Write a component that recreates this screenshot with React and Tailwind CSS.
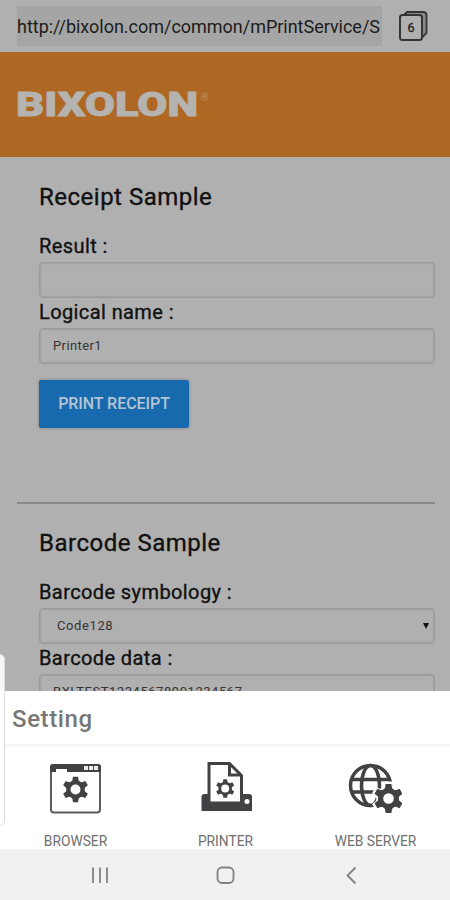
import React from "react";

const TEETH = [0, 60, 120, 180, 240, 300];

function Gear({ x, y, r, hole }) {
  return (
    <g transform={`translate(${x} ${y})`}>
      <circle
        r={(r * 0.72 + hole) / 2}
        fill="none"
        stroke="currentColor"
        strokeWidth={r * 0.72 - hole}
      />
      {TEETH.map((angle) => (
        <path
          key={angle}
          transform={`rotate(${angle}) scale(${r})`}
          d="M-.34-.62-.24-.72-.2-1H.2L.24-.72.34-.62Z"
          fill="currentColor"
        />
      ))}
    </g>
  );
}

function BrowserIcon() {
  return (
    <svg width="53" height="52" viewBox="0 0 53 52" className="text-[#424244]">
      <rect x="2" y="3" width="49" height="47.500" rx="3" fill="none" stroke="#5c5c5e" strokeWidth="2" />
      <path d="M1 10V5Q1 2 4 2H49Q52 2 52 5V10H18V7H7V10Z" fill="currentColor" />
      <path d="M35 4h4v4H35zM40 4h4v4H40zM45 4h4v4H45z" fill="#fff" opacity="0.9" />
      <Gear x={26.5} y={27.5} r={12.8} hole={5} />
    </svg>
  );
}

function PrinterIcon() {
  return (
    <svg width="53" height="52" viewBox="0 0 53 52" className="text-[#424244]">
      <path d="M2.500 49V35q0-3 3-3H50q3 0 3 3V49Z" fill="currentColor" />
      <path d="M10 41V1.500H30.500L42.500 13.500V41Z" fill="#fff" stroke="currentColor" strokeWidth="3" />
      <path d="M30.500 2V13H42" fill="none" stroke="currentColor" strokeWidth="3" />
      <circle cx="48" cy="39.500" r="2.500" fill="#fff" />
      <Gear x={26.200} y={26.500} r={9.300} hole={4} />
    </svg>
  );
}

function WebServerIcon() {
  return (
    <svg width="54" height="52" viewBox="0 0 54 52" className="text-[#424244]">
      <g fill="none" stroke="currentColor" strokeWidth="3.500">
        <circle cx="22.500" cy="23.500" r="20" />
        <ellipse cx="22.500" cy="23.500" rx="9" ry="20" />
        <path d="M4 17.500H41M4 30H41" />
      </g>
      <g className="text-white">
        <Gear x={40.500} y={36.500} r={17} hole={0} />
      </g>
      <Gear x={40.500} y={36.500} r={14.500} hole={5.300} />
    </svg>
  );
}

function TabsIcon() {
  return (
    <svg width="29" height="32" viewBox="0 0 29 32" fill="none" stroke="#343434">
      <path
        d="M5.500 4.500 8 2H24Q27.500 2 27.500 5V23L23.500 27"
        fill="#8a8a8a"
        strokeWidth="1.800"
      />
      <rect x="1" y="5" width="22" height="25" rx="2.500" fill="#b0b0b0" strokeWidth="2" />
      <text
        x="12"
        y="21.500"
        textAnchor="middle"
        fontSize="12.500"
        fontFamily="Roboto, sans-serif"
        fill="#222"
        stroke="#222"
        strokeWidth="0.300"
      >
        6
      </text>
    </svg>
  );
}

function Logo() {
  return (
    <svg width="196" height="40" viewBox="0 0 196 40" fill="#b5b3af">
      <text
        x="0"
        y="27"
        fontFamily="Roboto, sans-serif"
        fontWeight="900"
        fontSize="33.500"
        textLength="182"
        lengthAdjust="spacingAndGlyphs"
        stroke="#b5b3af"
        strokeWidth="0.800"
      >
        BIXOLON
      </text>
      <text x="184.500" y="12" fontFamily="Roboto, sans-serif" fontSize="10.500" opacity="0.6">
        ®
      </text>
    </svg>
  );
}

function Field({ label, children }) {
  return (
    <div className="h-[66px]">
      <div className="h-[30px] leading-[29px] text-[20px] text-[#111]">
        <span className="tracking-[0.4px] [-webkit-text-stroke:0.35px_#111]">
          {label}
        </span>
      </div>
      <div className="h-9 flex items-center justify-between rounded-[4px] border shadow-[inset_0_0_1px_1px_#a2a2a2] border-[#999] px-[13px] text-[13px] text-[#333]">
        {children}
      </div>
    </div>
  );
}

function SectionTitle({ children }) {
  return (
    <h2 className="h-[50px] text-[24px] leading-[31px] text-[#111]">
      <span className="tracking-[0.5px] [-webkit-text-stroke:0.35px_#111]">
        {children}
      </span>
    </h2>
  );
}

function SheetItem({ icon, label }) {
  return (
    <div className="w-[150px] flex flex-col items-center">
      {icon}
      <span className="mt-[19px] pl-px text-[13.8px] leading-4 text-[#707070]">
        {label}
      </span>
    </div>
  );
}

export default function App() {
  return (
    <div className="relative w-[450px] h-[900px] overflow-hidden flex flex-col bg-[#b0b0b0] font-[Roboto,sans-serif]">
      <div className="h-[52px] shrink-0 flex items-start pl-[17px]">
        <div className="mt-[6px] w-[365px] h-[40px] bg-[#a5a5a5] leading-[41px] text-[18px] text-[#1c1c1c] whitespace-nowrap">
          <span className="tracking-[-0.02px]">
            http://bixolon.com/common/mPrintService/S
          </span>
        </div>
        <div className="ml-[17px] mt-[10px]">
          <TabsIcon />
        </div>
      </div>

      <header className="h-[105px] shrink-0 bg-[#ae6823] pl-[16px] pt-[37px]">
        <Logo />
      </header>

      <main className="h-[534px] shrink-0 overflow-hidden">
        <section className="pl-[39px] pr-[15px] pt-[25px]">
          <SectionTitle>Receipt Sample</SectionTitle>
          <Field label="Result :" />
          <Field label="Logical name :">
            <span className="tracking-[0.4px]">Printer1</span>
          </Field>
          <button className="mt-[16px] block w-[150px] h-[48px] rounded-[2px] bg-[#176aae] text-[16px] text-[#b5c4d2] font-medium shadow-[0_0_3px_#777]">
            <span className="tracking-[-0.05px]">PRINT RECEIPT</span>
          </button>
        </section>
        <hr className="mt-[74px] ml-[17px] mr-[15px] border-t-2 border-[#888]" />
        <section className="pl-[39px] pr-[15px] pt-[24px]">
          <SectionTitle>Barcode Sample</SectionTitle>
          <Field label="Barcode symbology :">
            <span className="pl-1 tracking-[0.6px]">Code128</span>
            <svg width="6" height="6" viewBox="0 0 6 6" className="-mr-[8px]">
              <path d="M0 0H6L3 6Z" fill="#111" />
            </svg>
          </Field>
          <Field label="Barcode data :">
            <span className="tracking-[0.55px]">BXLTEST12345678901234567</span>
          </Field>
        </section>
      </main>

      <div className="h-[158px] shrink-0 bg-white">
        <h3 className="h-[53px] pl-[12px] leading-[57px] text-[24px] font-medium tracking-[0.6px] text-[#777]">
          Setting
        </h3>
        <div className="h-[3px] bg-[#f7f7f7]" />
        <div className="flex pt-[15px]">
          <SheetItem icon={<BrowserIcon />} label="BROWSER" />
          <SheetItem icon={<PrinterIcon />} label="PRINTER" />
          <SheetItem icon={<WebServerIcon />} label="WEB SERVER" />
        </div>
      </div>

      <nav className="h-[51px] shrink-0 bg-[#f1f1f1]">
        <svg width="450" height="51" viewBox="0 0 450 51" fill="none" stroke="#828282" strokeWidth="1.800">
          <path d="M93 18.500V34M100 18.500V34M107 18.500V34" />
          <rect x="217.500" y="18.500" width="16" height="15.500" rx="4.500" />
          <path d="M355.500 18.500 347.500 26.500 355.500 34.500" />
        </svg>
      </nav>

      {/* edge panel handle */}
      <div className="absolute left-[-10px] top-[654px] w-[15px] h-[172px] rounded-[5px] bg-white/90 border border-[#ddd]" />
    </div>
  );
}
